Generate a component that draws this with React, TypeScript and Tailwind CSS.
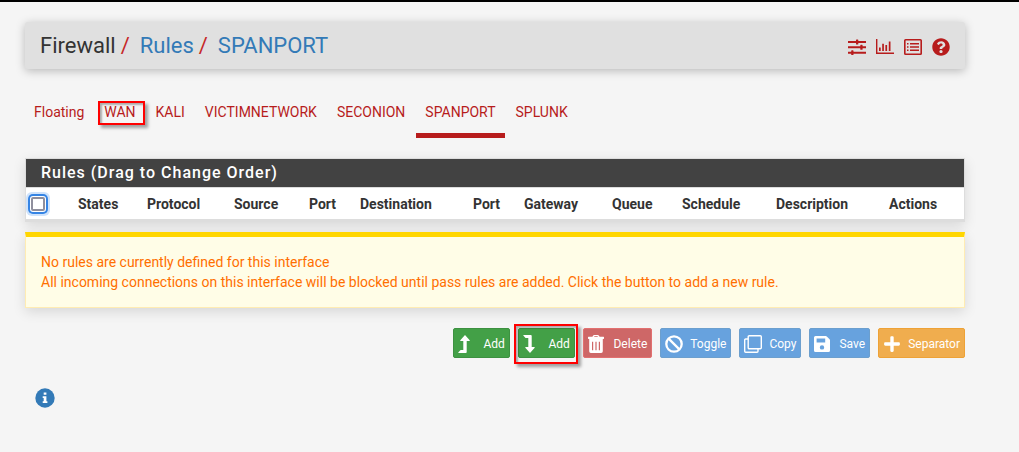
import type { ReactNode } from "react";
import { FaPlus, FaQuestionCircle } from "react-icons/fa";

function SlidersIcon() {
  return (
    <svg width="18" height="16" viewBox="0 0 18 16" fill="currentColor" aria-hidden="true">
      <path d="M0 2h8V1.100q0-.6.6-.6h1.100q.6 0 .6.6V2H18v2h-7.700v.9q0 .6-.6.6H8.600q-.6 0-.6-.6V4H0z" />
      <path d="M0 7.300h12.300V6.400q0-.6.6-.6H14q.6 0 .6.6v.9H18v2h-3.400v.9q0 .6-.6.6h-1.100q-.6 0-.6-.6v-.9H0z" />
      <path d="M0 12.800h3.200v-.9q0-.6.6-.6h1.100q.6 0 .6.6v.9H18v2H5.500v.6q0 .6-.6.6H3.800q-.6 0-.6-.6v-.6H0z" />
    </svg>
  );
}

function ChartIcon() {
  return (
    <svg width="18" height="15" viewBox="0 0 18 15" fill="currentColor" aria-hidden="true">
      <path d="M0 0h1.400v13.400H18V15H0zM3 8.500h1.700v3.500H3zM6.200 4.800h1.700V12H6.200zM9.400 6h1.700v6H9.400zM12.800 2.500h1.700V12h-1.700z" />
    </svg>
  );
}

function ListIcon() {
  return (
    <svg width="18" height="16" viewBox="0 0 18 16" fill="currentColor" aria-hidden="true">
      <path
        fillRule="evenodd"
        d="M1.600 0h14.800Q18 0 18 1.600v12.800q0 1.600-1.600 1.600H1.600Q0 16 0 14.400V1.600Q0 0 1.600 0zm0 1.400v13.200h14.800V1.400z"
      />
      <path d="M3 4h1.500v1.500H3zM3 7.200h1.500v1.500H3zM3 10.400h1.500v1.500H3zM6 4h9v1.500H6zM6 7.200h9v1.500H6zM6 10.400h9v1.500H6z" />
    </svg>
  );
}

function LevelUpIcon() {
  return (
    <svg width="12" height="18" viewBox="0 0 12 18" fill="currentColor" aria-hidden="true">
      <path d="M7 0l4.700 5.200q.3.800-.5.900H8.700v11q0 .9-.8.900H.6q-.5 0-.3-.5L2.300 15.300q.2-.3.600-.3h2.400V6.100H2.800Q2 6 2.300 5.200z" />
    </svg>
  );
}

function LevelDownIcon() {
  return (
    <svg width="12" height="18" viewBox="0 0 12 18" fill="currentColor" aria-hidden="true">
      <path d="M7 18l4.700-5.200q.3-.8-.5-.9H8.700V.9Q8.700 0 7.900 0H.6Q.1 0 .3.500l2 2.200q.2.300.6.300h2.400v8.900H2.800q-.8.100-.5.900z" />
    </svg>
  );
}

function TrashIcon() {
  return (
    <svg width="16" height="18" viewBox="0 0 16 18" fill="currentColor" aria-hidden="true">
      <path
        fillRule="evenodd"
        d="M5.200.6Q5.500 0 6.200 0h3.600q.7 0 1 .6L11.600 1.700H15.500q.5 0 .5.500v1.400q0 .4-.5.400H.5Q0 4 0 3.600V2.200q0-.5.500-.5h3.900zM6.500 1l-.4.700h3.800L9.500 1z"
      />
      <path
        fillRule="evenodd"
        d="M1.200 4h13.600v12.200q0 1.800-1.600 1.800H2.800q-1.600 0-1.600-1.800zM4 6.700v8.600h1.200V6.700zm3.400 0v8.600h1.200V6.700zm3.400 0v8.600H12V6.700z"
      />
    </svg>
  );
}

function BanIcon() {
  return (
    <svg width="18" height="18" viewBox="0 0 18 18" fill="none" stroke="currentColor" strokeWidth="2.300" aria-hidden="true">
      <circle cx="9" cy="9" r="7.700" />
      <path d="M3.600 3.600l10.800 10.800" />
    </svg>
  );
}

function CloneIcon() {
  return (
    <svg width="18" height="18" viewBox="0 0 18 18" fill="none" stroke="currentColor" strokeWidth="1.400" aria-hidden="true">
      <rect x="4.200" y=".7" width="13.100" height="13.100" rx="1" />
      <path d="M4.200 4H1.700q-1 0-1 1v11.300q0 1 1 1H13q1 0 1-1v-2.500" />
    </svg>
  );
}

function SaveIcon() {
  return (
    <svg width="16" height="16" viewBox="0 0 16 16" fill="currentColor" aria-hidden="true">
      <path
        fillRule="evenodd"
        d="M1.500 0h10.300q.6 0 1 .4l2.800 2.800q.4.400.4 1v10.300q0 1.500-1.500 1.500h-13Q0 16 0 14.500v-13Q0 0 1.500 0zM2.600 2.500v4h8.600v-4zM8 9.200a2.200 2.200 0 1 0 0 4.400 2.200 2.200 0 0 0 0-4.400z"
      />
    </svg>
  );
}

function InfoIcon() {
  return (
    <svg width="20" height="20" viewBox="0 0 20 20" aria-hidden="true">
      <circle cx="10" cy="10" r="9.700" fill="#337ab7" />
      <path d="M8.700 4.500h2.700v2.300H8.700zM7.700 8.200h3.700v5h1v1.900H7.700v-1.900h1v-3.100h-1z" fill="#fff" />
    </svg>
  );
}

function Highlight({ className }: { className: string }) {
  return (
    <span
      className={`pointer-events-none absolute border-2 border-[#ff0000] shadow-[3px_3px_3px_rgba(0,0,0,0.35),inset_2px_2px_2px_rgba(0,0,0,0.3)] ${className}`}
    />
  );
}

const tabs = ["Floating", "WAN", "KALI", "VICTIMNETWORK", "SECONION", "SPANPORT", "SPLUNK"];

const columns = [
  { label: "States", width: "w-[69px]" },
  { label: "Protocol", width: "w-[87px]" },
  { label: "Source", width: "w-[75px]" },
  { label: "Port", width: "w-[51px]" },
  { label: "Destination", width: "w-[113px]" },
  { label: "Port", width: "w-[51px]" },
  { label: "Gateway", width: "w-[88px]" },
  { label: "Queue", width: "w-[70px]" },
  { label: "Schedule", width: "w-[94px]" },
  { label: "Description", width: "w-[113px]" },
  { label: "Actions", width: "w-[80px]" },
];

const actions: { label: string; icon: ReactNode; color: string; marked?: boolean }[] = [
  { label: "Add", icon: <LevelUpIcon />, color: "bg-[#43a047] border-[#3d9141]" },
  { label: "Add", icon: <LevelDownIcon />, color: "bg-[#43a047] border-[#3d9141]", marked: true },
  { label: "Delete", icon: <TrashIcon />, color: "bg-[#ce6767] border-[#e27070]" },
  { label: "Toggle", icon: <BanIcon />, color: "bg-[#67a2de] border-[#6c9fce]" },
  { label: "Copy", icon: <CloneIcon />, color: "bg-[#67a2de] border-[#6c9fce]" },
  { label: "Save", icon: <SaveIcon />, color: "bg-[#67a2de] border-[#6c9fce]" },
  { label: "Separator", icon: <FaPlus size={18} />, color: "bg-[#f0ad4e] border-[#eea236]" },
];

export default function App() {
  return (
    <div className="min-h-screen border-t-2 border-black bg-[#f5f5f5] pt-5 pr-[54px] pb-8 pl-[25px] font-[Roboto,sans-serif] text-sm leading-5 text-[#333]">
      <header className="flex items-center justify-between rounded-[3px] bg-[#e0e0e0] px-[15px] py-[9px] shadow-[0_2px_10px_rgba(0,0,0,0.25)]">
        <h1 className="flex gap-2.5 text-[22px] leading-[29px] text-[#333]">
          <span>
            Firewall<span className="ml-[5px] text-[#c62828]">/</span>
          </span>
          <span>
            <a href="#rules" className="text-[#337ab7]">Rules</a>
            <span className="ml-[5px] text-[#c62828]">/</span>
          </span>
          <a href="#spanport" className="text-[#337ab7]">SPANPORT</a>
        </h1>
        <nav aria-label="Page tools" className="flex items-center gap-2.5 pt-0.5 text-[#b71c1c]">
          <a href="#advanced" aria-label="Related settings"><SlidersIcon /></a>
          <a href="#status" aria-label="Related status"><ChartIcon /></a>
          <a href="#log" aria-label="Related log entries"><ListIcon /></a>
          <a href="#help" aria-label="Help"><FaQuestionCircle size={18} /></a>
        </nav>
      </header>

      <nav aria-label="Interfaces" className="mt-[33px] flex gap-0.5">
        {tabs.map((tab) => (
          <a
            key={tab}
            href={`#${tab.toLowerCase()}`}
            aria-current={tab === "SPANPORT" ? "page" : undefined}
            className={`relative border-b-[5px] px-[9px] pb-[11px] text-[#b71c1c] ${
              tab === "SPANPORT" ? "border-[#b71c1c]" : "border-transparent"
            }`}
          >
            {tab}
            {tab === "WAN" && <Highlight className="-top-px right-0 left-[3px] h-6" />}
          </a>
        ))}
      </nav>

      <section className="mt-5 border border-b-[3px] border-[#ddd] bg-white shadow-[0_4px_12px_rgba(0,0,0,0.12)]">
        <h2 className="border-b border-[#ddd] bg-[#424242] px-[15px] py-1 text-base leading-5 font-medium tracking-[1px] text-white">
          Rules (Drag to Change Order)
        </h2>
        <table className="w-full table-fixed">
          <thead>
            <tr className="h-[31px]">
              <th className="w-[47px] pl-[5px] text-left">
                <input
                  type="checkbox"
                  aria-label="Select all rules"
                  className="block size-3.5 appearance-none rounded-xs border-2 border-[#8f8f9d] bg-white shadow-[0_0_0_1px_#fff,0_0_0_3px_#3584e4,0_0_0_5px_#cfe3fb]"
                />
              </th>
              {columns.map((column, index) => (
                <th key={index} scope="col" className={`pl-[5px] text-left font-bold ${column.width}`}>
                  {column.label}
                </th>
              ))}
            </tr>
          </thead>
        </table>
      </section>

      <div
        role="status"
        className="mt-2.5 border border-t-[5px] border-[#ffecb3] border-t-[#ffd600] bg-[#fffde7] p-[15px] text-[#ff6f00] shadow-[0_4px_12px_rgba(0,0,0,0.12)]"
      >
        <p>No rules are currently defined for this interface</p>
        <p>All incoming connections on this interface will be blocked until pass rules are added. Click the button to add a new rule.</p>
      </div>

      <div className="mt-5 flex flex-wrap justify-end gap-2">
        {actions.map((action, index) => (
          <button
            key={index}
            type="button"
            className={`relative flex h-[30px] min-w-[57px] items-center rounded-xs border pt-0.5 pr-1 pl-1 text-xs text-white ${action.color}`}
          >
            <span className="w-[25px]">{action.icon}</span>
            {action.label}
            {action.marked && <Highlight className="-top-[5px] -right-1 -bottom-[7px] -left-[5px]" />}
          </button>
        ))}
      </div>

      <button type="button" aria-label="Information" className="mt-[30px] ml-2.5 block">
        <InfoIcon />
      </button>
    </div>
  );
}
